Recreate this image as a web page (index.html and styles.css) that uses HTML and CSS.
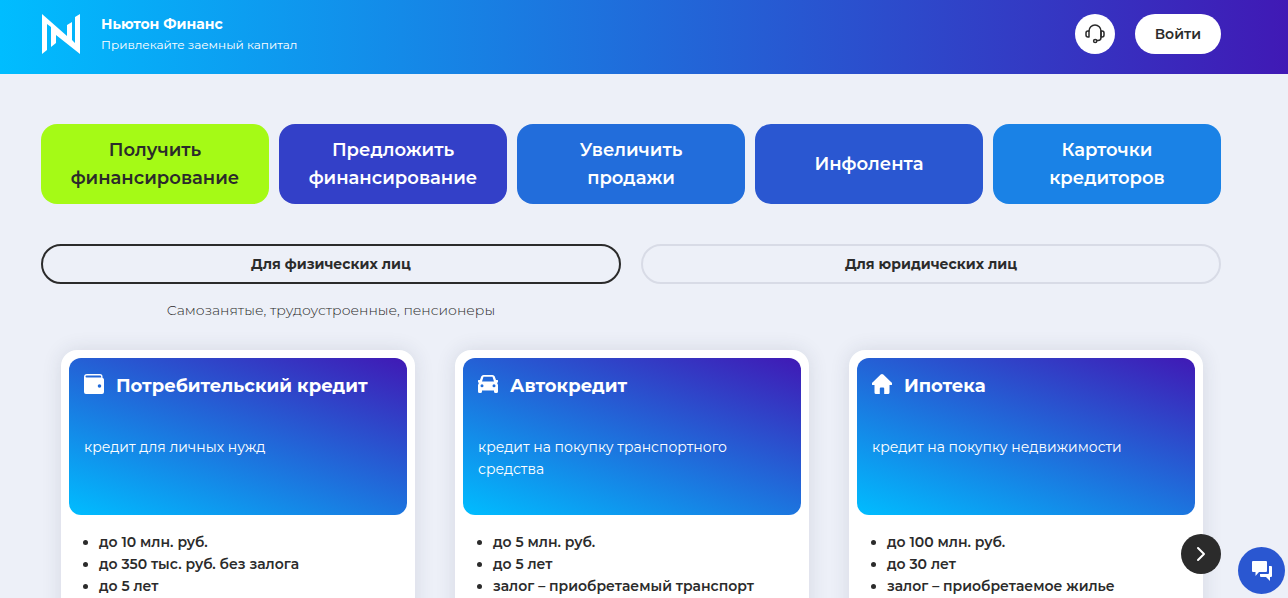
FILE: index.html
```html
<!DOCTYPE html>
<html lang="ru">
<head>
<meta charset="utf-8">
<meta name="viewport" content="width=device-width, initial-scale=1">
<title>Ньютон Финанс</title>
<link rel="stylesheet" href="styles.css">
</head>
<body>
<header class="header">
  <a class="brand" href="#">
    <svg class="brand-logo" viewBox="0 0 40 40" aria-hidden="true"><path fill="#fff" d="M1 0 26 22V11L31 8V26L34 29V3L39 0V40L15 21V29L10 33V13L6 10V36L1 40Z"/></svg>
    <span class="brand-text">
      <span class="brand-name">Ньютон Финанс</span>
      <span class="brand-slogan">Привлекайте заемный капитал</span>
    </span>
  </a>
  <div class="header-actions">
    <button class="support" type="button" aria-label="Поддержка">
      <svg class="support-icon" viewBox="0 0 20 20" fill="none" stroke="#2b2b2b" stroke-width="1.500" stroke-linecap="round" stroke-linejoin="round" aria-hidden="true"><path d="M4 7A6 6 0 0 1 16 7V13.500A3 3 0 0 1 13 16.500H11.800"/><path d="M4 7H3A2 2 0 0 0 1 9V11A2 2 0 0 0 3 13H4Z"/><path d="M16 7H17A2 2 0 0 1 19 9V11A2 2 0 0 1 17 13H16Z"/><circle cx="10.200" cy="17" r="1.600"/></svg>
    </button>
    <button class="login" type="button">Войти</button>
  </div>
</header>
<main class="main">
  <nav class="tiles">
    <a class="tile tile-active" href="#">Получить финансирование</a>
    <a class="tile tile-indigo" href="#">Предложить финансирование</a>
    <a class="tile tile-blue" href="#">Увеличить продажи</a>
    <a class="tile tile-royal" href="#">Инфолента</a>
    <a class="tile tile-sky" href="#">Карточки кредиторов</a>
  </nav>
  <div class="tabs">
    <button class="tab tab-active" type="button">Для физических лиц</button>
    <button class="tab" type="button">Для юридических лиц</button>
    <p class="tab-note">Самозанятые, трудоустроенные, пенсионеры</p>
  </div>
  <section class="carousel">
    <article class="card">
      <div class="card-banner">
        <h2 class="card-title">
          <svg class="card-icon" viewBox="0 0 20 20" aria-hidden="true"><path fill="#fff" fill-rule="evenodd" d="M3 0H16A2.500 2.500 0 0 1 18.500 2.500V3.800A2 2 0 0 1 20 5.800V18A2 2 0 0 1 18 20H2A2 2 0 0 1 0 18V3A3 3 0 0 1 3 0ZM2.500 1.600A1 1 0 0 0 2.500 3.600H17.200V2.800A1.200 1.200 0 0 0 16 1.600ZM15.500 10.200A1.800 1.800 0 1 0 15.500 13.800A1.800 1.800 0 1 0 15.500 10.200Z"/></svg>
          <span>Потребительский кредит</span>
        </h2>
        <p class="card-text">кредит для личных нужд</p>
      </div>
      <ul class="card-list">
        <li>до 10 млн. руб.</li>
        <li>до 350 тыс. руб. без залога</li>
        <li>до 5 лет</li>
      </ul>
    </article>
    <article class="card">
      <div class="card-banner">
        <h2 class="card-title">
          <svg class="card-icon" viewBox="0 0 20 20" aria-hidden="true"><path fill="#fff" fill-rule="evenodd" d="M5.500 1H14.500A2.500 2.500 0 0 1 16.800 2.600L18 6H19.200A.8 .8 0 0 1 20 7V8A.8 .8 0 0 1 19.200 8.700H19L20 11V17.500A1.500 1.500 0 0 1 18.500 19H17.500A1.500 1.500 0 0 1 16 17.500V16.500H4V17.500A1.500 1.500 0 0 1 2.500 19H1.500A1.500 1.500 0 0 1 0 17.500V11L1 8.700H.8A.8 .8 0 0 1 0 8V7A.8 .8 0 0 1 .8 6H2L3.200 2.600A2.500 2.500 0 0 1 5.500 1ZM5.500 2.800 4 7.500H16L14.500 2.800ZM4 10.300A1.500 1.500 0 1 0 4 13.300A1.500 1.500 0 1 0 4 10.300ZM16 10.300A1.500 1.500 0 1 0 16 13.300A1.500 1.500 0 1 0 16 10.300Z"/></svg>
          <span>Автокредит</span>
        </h2>
        <p class="card-text">кредит на покупку транспортного средства</p>
      </div>
      <ul class="card-list">
        <li>до 5 млн. руб.</li>
        <li>до 5 лет</li>
        <li>залог – приобретаемый транспорт</li>
      </ul>
    </article>
    <article class="card">
      <div class="card-banner">
        <h2 class="card-title">
          <svg class="card-icon" viewBox="0 0 20 20" aria-hidden="true"><path fill="#fff" d="M8.700 .6A2 2 0 0 1 11.300 .6L19.500 8.500A1.300 1.300 0 0 1 18.700 11H17.500V18.500A1.500 1.500 0 0 1 16 20H12.200V14.500A1 1 0 0 0 11.200 13.500H8.800A1 1 0 0 0 7.800 14.500V20H4A1.500 1.500 0 0 1 2.500 18.500V11H1.300A1.300 1.300 0 0 1 .5 8.500Z"/></svg>
          <span>Ипотека</span>
        </h2>
        <p class="card-text">кредит на покупку недвижимости</p>
      </div>
      <ul class="card-list">
        <li>до 100 млн. руб.</li>
        <li>до 30 лет</li>
        <li>залог – приобретаемое жилье</li>
      </ul>
    </article>
    <button class="next" type="button" aria-label="Далее">
      <svg class="next-icon" viewBox="0 0 20 20" fill="none" stroke="#fff" stroke-width="2" stroke-linecap="round" stroke-linejoin="round" aria-hidden="true"><path d="M7 4 13 10 7 16"/></svg>
    </button>
  </section>
</main>
<button class="chat" type="button" aria-label="Чат">
  <svg class="chat-icon" viewBox="0 0 20 20" fill="#fff" aria-hidden="true"><path d="M1 0H14A1 1 0 0 1 15 1V10A1 1 0 0 1 14 11H7L3.500 15V11H1A1 1 0 0 1 0 10V1A1 1 0 0 1 1 0Z"/><path d="M17 5H19A1 1 0 0 1 20 6V15A1 1 0 0 1 19 16H18V20L14 16H9A1 1 0 0 1 8 15V13H16A1 1 0 0 0 17 12Z"/></svg>
</button>
</body>
</html>
```
FILE: styles.css
```css
* {
  box-sizing: border-box;
}

body {
  display: flex;
  flex-direction: column;
  height: 100vh;
  margin: 0;
  overflow: hidden;
  background: #edf0f8;
  color: #2b2b2b;
  font-family: Montserrat, Inter, sans-serif;
  font-size: 14px;
  line-height: 22px;
}

button {
  padding: 0;
  border: 0;
  color: inherit;
  font: inherit;
  cursor: pointer;
}

a {
  color: inherit;
  text-decoration: none;
}

h2,
p,
ul {
  margin: 0;
}

svg {
  display: block;
}

.header {
  display: flex;
  flex: none;
  align-items: center;
  justify-content: space-between;
  padding: 12px 67px 18px 41px;
  background: linear-gradient(90deg, #00bdff, #4019b5);
}

.brand {
  display: flex;
  align-items: center;
  gap: 20px;
  color: #fff;
}

.brand-logo {
  width: 40px;
  height: 40px;
}

.brand-text {
  display: flex;
  flex-direction: column;
  padding-top: 2px;
}

.brand-name {
  font-weight: 700;
  line-height: 20px;
}

.brand-slogan {
  font-size: 12px;
  line-height: 22px;
}

.header-actions {
  display: flex;
  gap: 20px;
}

.support {
  display: grid;
  place-items: center;
  width: 40px;
  height: 40px;
  border-radius: 50%;
  background: #fff;
}

.support-icon,
.next-icon,
.chat-icon,
.card-icon {
  width: 20px;
  height: 20px;
}

.login {
  padding: 0 20px;
  border-radius: 20px;
  background: #fff;
  font-weight: 600;
}

.main {
  flex: none;
  padding: 50px 67px 0 41px;
}

.tiles {
  display: grid;
  grid-template-columns: repeat(5, 1fr);
  gap: 10px;
}

.tile {
  display: flex;
  align-items: center;
  justify-content: center;
  height: 80px;
  padding: 0 20px;
  border-radius: 16px;
  color: #fff;
  font-size: 18px;
  font-weight: 600;
  line-height: 28px;
  text-align: center;
}

.tile-active {
  background: #a5fa16;
  color: #2b2b2b;
}

.tile-indigo {
  background: #3340c8;
}

.tile-blue {
  background: #226ddb;
}

.tile-royal {
  background: #2a57d1;
}

.tile-sky {
  background: #1a82e6;
}

.tabs {
  display: grid;
  grid-template-columns: 1fr 1fr;
  gap: 15px 20px;
  margin-top: 40px;
}

.tab {
  height: 40px;
  border: 2px solid #d8dbe6;
  border-radius: 20px;
  background: transparent;
  font-weight: 700;
}

.tab-active {
  border-color: #2b2b2b;
}

.tab-note {
  font-weight: 300;
  text-align: center;
}

.carousel {
  position: relative;
  display: grid;
  grid-template-columns: repeat(3, 1fr);
  gap: 40px;
  margin-top: 29px;
  padding: 0 18px 0 20px;
}

.card {
  min-height: 400px;
  padding: 8px;
  border-radius: 16px;
  background: #fff;
  box-shadow: 0 0 20px rgba(40, 50, 70, 0.12);
}

.card-banner {
  min-height: 157px;
  padding: 16px 15px;
  border-radius: 12px;
  background: linear-gradient(20deg, #00bdff, #4019b5);
  color: #fff;
}

.card-title {
  display: flex;
  align-items: flex-start;
  gap: 12px;
  font-size: 18px;
  font-weight: 700;
  line-height: 24px;
}

.card-text {
  margin-top: 38px;
}

.card-list {
  padding: 16px 8px 16px 30px;
  font-weight: 600;
}

.next {
  position: absolute;
  top: 184px;
  right: 0;
  display: grid;
  place-items: center;
  width: 40px;
  height: 40px;
  border-radius: 50%;
  background: #2b2b2b;
}

.chat {
  position: fixed;
  right: 3px;
  bottom: 4px;
  display: grid;
  place-items: center;
  width: 47px;
  height: 47px;
  border-radius: 50%;
  background: #2a57d1;
}
```
